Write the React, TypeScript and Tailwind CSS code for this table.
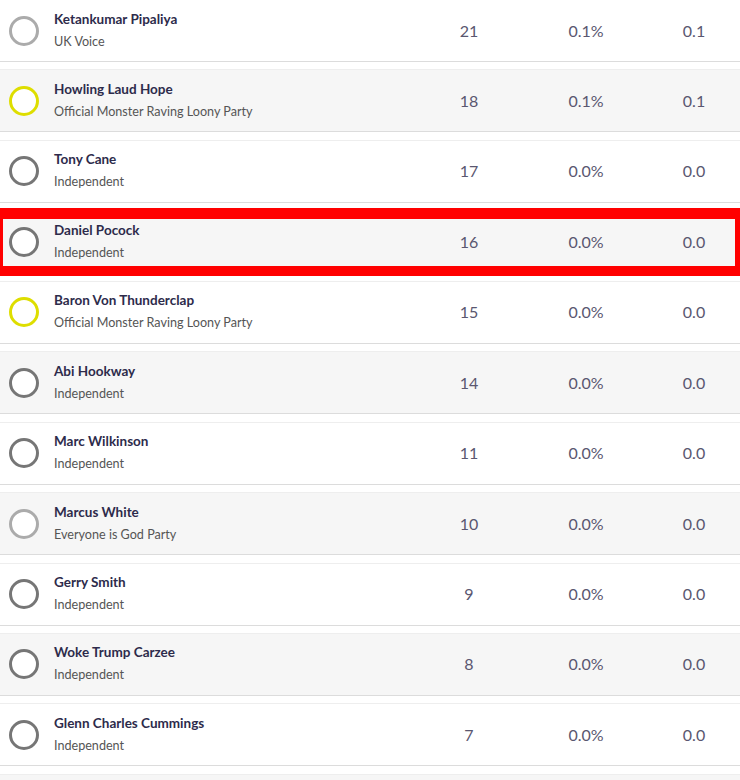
const candidates = [
  { name: 'Ketankumar Pipaliya', party: 'UK Voice', votes: 21, share: '0.1%', change: '0.1', ring: 'border-[#ababab]' },
  { name: 'Howling Laud Hope', party: 'Official Monster Raving Loony Party', votes: 18, share: '0.1%', change: '0.1', ring: 'border-[#dede00]' },
  { name: 'Tony Cane', party: 'Independent', votes: 17, share: '0.0%', change: '0.0', ring: 'border-[#767676]' },
  { name: 'Daniel Pocock', party: 'Independent', votes: 16, share: '0.0%', change: '0.0', ring: 'border-[#767676]', highlight: true },
  { name: 'Baron Von Thunderclap', party: 'Official Monster Raving Loony Party', votes: 15, share: '0.0%', change: '0.0', ring: 'border-[#dede00]' },
  { name: 'Abi Hookway', party: 'Independent', votes: 14, share: '0.0%', change: '0.0', ring: 'border-[#767676]' },
  { name: 'Marc Wilkinson', party: 'Independent', votes: 11, share: '0.0%', change: '0.0', ring: 'border-[#767676]' },
  { name: 'Marcus White', party: 'Everyone is God Party', votes: 10, share: '0.0%', change: '0.0', ring: 'border-[#ababab]' },
  { name: 'Gerry Smith', party: 'Independent', votes: 9, share: '0.0%', change: '0.0', ring: 'border-[#767676]' },
  { name: 'Woke Trump Carzee', party: 'Independent', votes: 8, share: '0.0%', change: '0.0', ring: 'border-[#767676]' },
  { name: 'Glenn Charles Cummings', party: 'Independent', votes: 7, share: '0.0%', change: '0.0', ring: 'border-[#767676]' },
  { name: '', party: '', votes: 0, share: '', change: '', ring: 'border-transparent' },
];

export default function App() {
  return (
    <div className="w-[740px] h-[780px] overflow-hidden bg-white font-['Lato',sans-serif]">
      <div className="-mt-px">
        {candidates.map((c, i) => (
          <div
            key={i}
            className={`relative flex items-center h-[63px] mb-[7.45px] border-t border-b border-t-[#eeeeee] border-b-[#dcdcdc] ${
              i % 2 === 1 ? 'bg-[#f6f6f6]' : 'bg-white'
            }`}
          >
            <div className="flex flex-1 items-center pl-[9px] gap-[15px]">
              <div className={`w-[30px] h-[30px] rounded-full border-[3px] bg-white ${c.ring}`} />
              <div className="flex flex-col gap-[7px] -mt-[1px]">
                <span className="text-[13.5px] leading-[16px] font-bold text-[#2d2b4b]">{c.name}</span>
                <span className="text-[12.6px] leading-[16px] text-[#555555]">{c.party}</span>
              </div>
            </div>
            <div className="w-[98px] text-center text-[16px] text-[#5a5770]">{c.votes || ''}</div>
            <div className="w-[136px] text-center text-[16px] text-[#5a5770]">{c.share}</div>
            <div className="w-[80px] text-center text-[16px] text-[#5a5770]">{c.change}</div>
            <div className="w-[6px]" />
            {c.highlight && (
              <div className="absolute left-0 right-0 -top-[3px] -bottom-[4px] border-t-[11px] border-b-[10px] border-l-[3px] border-r-[5px] border-[#ff0000]" />
            )}
          </div>
        ))}
      </div>
    </div>
  );
}
